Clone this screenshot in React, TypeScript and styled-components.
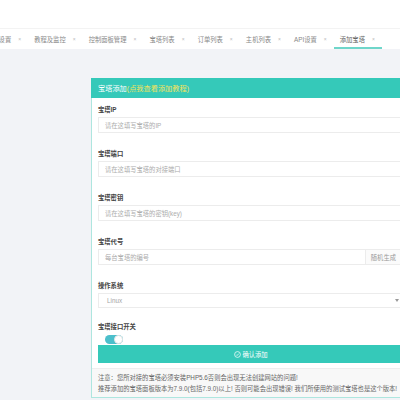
import React from "react";
import styled, { createGlobalStyle } from "styled-components";

const GlobalStyle = createGlobalStyle`
  html, body {
    margin: 0;
    padding: 0;
    background: #f2f3f7;
    font-family: "Liberation Sans", "Noto Sans CJK SC", sans-serif;
  }
  * { box-sizing: border-box; }
`;

const Page = styled.div`
  width: 400px;
  height: 400px;
  overflow: hidden;
  background: #f2f3f7;
`;

const TopBar = styled.div`
  height: 28px;
  background: #fff;
`;

const TabBar = styled.div`
  height: 21px;
  background: #fff;
  border-top: 1px solid #f3f3f3;
  overflow: hidden;
`;

const TabList = styled.div`
  display: flex;
  height: 100%;
  margin-left: -20px;
`;

const Tab = styled.div<{ $active?: boolean }>`
  display: flex;
  align-items: center;
  gap: 7px;
  padding: 2px 6px 0;
  height: 100%;
  flex-shrink: 0;
  font-size: 6.3px;
  color: ${(p) => (p.$active ? "#666" : "#888")};
  border-bottom: 2px solid ${(p) => (p.$active ? "#6fd6ca" : "transparent")};
`;

const Close = styled.span`
  font-size: 5px;
  color: #bbb;
  width: 4px;
`;

const Content = styled.div`
  padding: 29px 0 0 91px;
`;

const Card = styled.div`
  width: 320px;
  background: #fff;
  border: 1px solid #aee6df;
  border-top: none;
`;

const CardHeader = styled.div`
  height: 20px;
  display: flex;
  align-items: center;
  margin: 0 -1px;
  padding-left: 7px;
  background: #35c9b9;
  color: #fff;
  font-size: 7.2px;
`;

const Tip = styled.span`
  color: #f3e35c;
`;

const CardBody = styled.div`
  padding: 7px 6px 5px;
`;

const Field = styled.div<{ $gap?: number }>`
  margin-bottom: ${(p) => p.$gap ?? 16}px;
`;

const Label = styled.div`
  height: 10px;
  line-height: 10px;
  font-size: 6.3px;
  font-weight: bold;
  color: #444;
  margin-bottom: 2px;
`;

const InputRow = styled.div`
  display: flex;
  height: 16px;
  border: 1px solid #ececec;
`;

const Input = styled.input`
  flex: 1;
  min-width: 0;
  border: none;
  outline: none;
  padding: 0 6px;
  font-family: inherit;
  font-size: 6.3px;
  color: #333;
  background: transparent;
  &::placeholder {
    color: #acacac;
  }
`;

const Addon = styled.div`
  display: flex;
  align-items: center;
  padding: 0 7px 0 5px;
  border-left: 1px solid #ececec;
  background: #fbfbfb;
  font-size: 6.3px;
  color: #999;
`;

const Select = styled.div`
  height: 15px;
  border: 1px solid #ececec;
  display: flex;
  align-items: center;
  justify-content: space-between;
  padding: 0 4px 0 8px;
  font-size: 6.3px;
  color: #a5a5a5;
`;

const Caret = styled.span`
  width: 0;
  height: 0;
  border-left: 2px solid transparent;
  border-right: 2px solid transparent;
  border-top: 3px solid #999;
`;

const SwitchWrap = styled.div`
  padding-left: 7px;
  height: 10px;
  display: flex;
  align-items: center;
`;

const Switch = styled.div`
  width: 18px;
  height: 9px;
  border-radius: 5px;
  background: #4cbfcb;
  display: flex;
  justify-content: flex-end;
`;

const Knob = styled.div`
  width: 9px;
  height: 9px;
  border-radius: 50%;
  background: #fff;
  border: 1px solid #e6e6e6;
`;

const Submit = styled.button`
  width: 100%;
  height: 18px;
  border: none;
  background: #35c9b9;
  color: #fff;
  font-family: inherit;
  font-size: 6.3px;
  display: flex;
  align-items: center;
  justify-content: center;
  gap: 1px;
  padding: 0;
`;

const Footer = styled.div`
  background: #f8f8f8;
  border-top: 1px solid #eeeeee;
  padding: 4px 6px 3px;
  font-size: 6.3px;
  line-height: 10.6px;
  color: #666;
`;

const tabs = ["系统设置", "教程及监控", "控制面板管理", "宝塔列表", "订单列表", "主机列表", "API设置", "添加宝塔"];

export default function App() {
  return (
    <Page>
      <GlobalStyle />
      <TopBar />
      <TabBar>
        <TabList>
          {tabs.map((t, i) => (
            <Tab key={t} $active={i === tabs.length - 1}>
              <span>{t}</span>
              <Close>×</Close>
            </Tab>
          ))}
        </TabList>
      </TabBar>
      <Content>
        <Card>
          <CardHeader>
            宝塔添加<Tip>(点我查看添加教程)</Tip>
          </CardHeader>
          <CardBody>
            <Field>
              <Label>宝塔IP</Label>
              <InputRow>
                <Input placeholder="请在这填写宝塔的IP" />
              </InputRow>
            </Field>
            <Field>
              <Label>宝塔端口</Label>
              <InputRow>
                <Input placeholder="请在这填写宝塔的对接端口" />
              </InputRow>
            </Field>
            <Field>
              <Label>宝塔密钥</Label>
              <InputRow>
                <Input placeholder="请在这填写宝塔的密钥(key)" />
              </InputRow>
            </Field>
            <Field>
              <Label>宝塔代号</Label>
              <InputRow>
                <Input placeholder="每台宝塔的编号" />
                <Addon>随机生成</Addon>
              </InputRow>
            </Field>
            <Field $gap={14}>
              <Label>操作系统</Label>
              <Select>
                <span>Linux</span>
                <Caret />
              </Select>
            </Field>
            <Field $gap={1}>
              <Label>宝塔接口开关</Label>
              <SwitchWrap>
                <Switch>
                  <Knob />
                </Switch>
              </SwitchWrap>
            </Field>
            <Submit>
              <svg width="7" height="7" viewBox="0 0 24 24" fill="none" stroke="#fff" strokeWidth="2.5">
                <circle cx="12" cy="12" r="10" />
                <path d="M7.5 12.5l3 3 6-6.5" />
              </svg>
              确认添加
            </Submit>
          </CardBody>
          <Footer>
            <div>注意：您所对接的宝塔必须安装PHP5.6否则会出现无法创建网站的问题!</div>
            <div>推荐添加的宝塔面板版本为7.9.0(包括7.9.0)以上! 否则可能会出现错误! 我们所使用的测试宝塔也是这个版本!</div>
          </Footer>
        </Card>
      </Content>
    </Page>
  );
}
